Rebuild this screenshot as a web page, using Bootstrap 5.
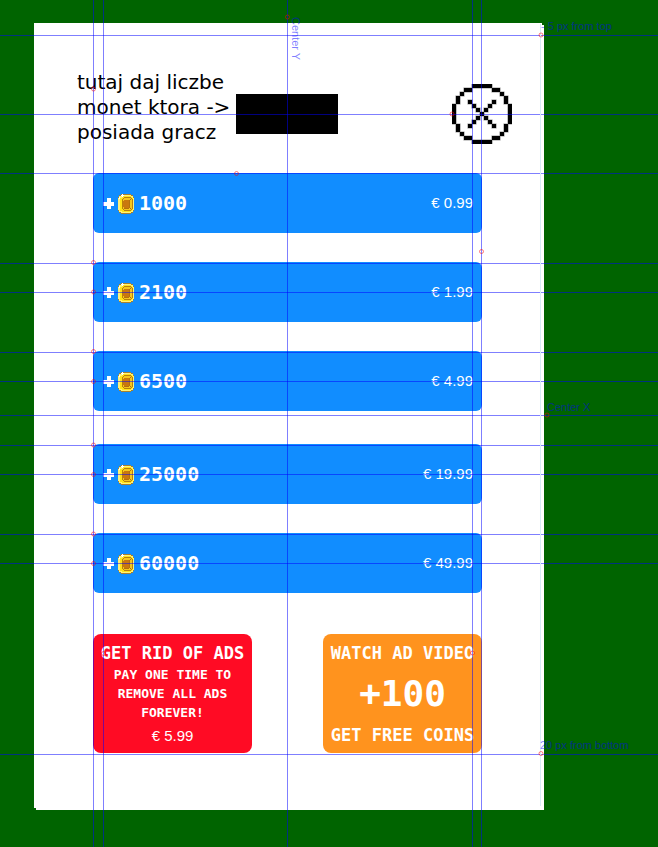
<!DOCTYPE html>
<html lang="pl">
<head>
<meta charset="utf-8">
<meta name="viewport" content="width=device-width, initial-scale=1">
<title>Coin shop</title>
<link href="https://cdn.jsdelivr.net/npm/bootstrap@5.3.0/dist/css/bootstrap.min.css" rel="stylesheet">
<style>
  body { background: #006400; font-family: "Liberation Sans", sans-serif; color: #000; }
  .stage { padding: 23px 114px 37px 34px; min-height: 847px; overflow: hidden; }
  .shop { background: #fff; padding: 47px 62px 57px 59px; }
  .shop-head { margin-left: -16px; margin-right: -30px; margin-bottom: 28px; }
  .note { font: 20px/25px "DejaVu Sans", sans-serif; width: 159px; white-space: nowrap; }
  .balance { width: 102px; height: 40px; background: #000; margin-top: 24px; }
  .close-btn { width: 60px; height: 60px; margin-top: 14px; background: none; line-height: 0; }
  .pack { background: #118dff; color: #fff; height: 60px; border-radius: 6px; padding: 0 9px 0 8px; }
  .packs { gap: 29px; }
  .pack-big { margin-top: 4px; }
  .pixel { font-family: "DejaVu Sans Mono", monospace; font-weight: 700; }
  .amount { font-size: 20px; line-height: 24px; }
  .plus-icon { margin-left: 2px; margin-right: 4px; }
  .coin { margin-right: 5px; margin-top: 1px; }
  .price { font-size: 15px; line-height: 20px; }
  .offers { margin-top: 41px; }
  .offer { width: 159px; height: 119px; border-radius: 8px; color: #fff; white-space: nowrap; padding: 8px 0 7px; }
  .offer-ads { background: #ff0b24; }
  .offer-video { background: #ff931e; }
  .offer-title { font-size: 17px; line-height: 22px; }
  .offer-text { font-size: 13px; line-height: 19px; margin-bottom: 3px; }
  .offer-sum { font-size: 36px; line-height: 40px; }
  .guides { left: 0; top: 0; pointer-events: none; }
  .guides text { font: 11px "Liberation Sans", sans-serif; fill: #00f; fill-opacity: .5; }
</style>
<script src="https://cdn.jsdelivr.net/npm/bootstrap@5.3.0/dist/js/bootstrap.bundle.min.js"></script>
</head>
<body>
<svg width="0" height="0" class="position-absolute" aria-hidden="true">
  <symbol id="coin" viewBox="0 0 16 20" shape-rendering="crispEdges">
    <path fill="#a8802c" d="M3 0h10v1h2v2h1v14h-1v2h-2v1H3v-1H1v-2H0V3h1V1h2z"/>
    <path fill="#fff27a" d="M3 1h10v1h2v2h1v12h-1v2h-2v1H3v-1H1v-2H0V4h1V2h2z"/>
    <path fill="#ffe21a" d="M4 2h9v1h1v1h1v12h-1v1h-1v1H4v-1H2V4h2z"/>
    <path fill="#b8800c" d="M6 3h7v1h1v1h1v10h-1v1h-1v1H6v-1H5v-1H4V5h1V4h1z"/>
    <path fill="#f5c71c" d="M6 4h7v1h1v10h-1v1H6v-1H5V5h1z"/>
    <path fill="#c9780e" d="M5 7h1V6h5v8H6v-1H5z"/>
    <path fill="#b4700c" d="M11 6h1v8h-1zM6 14h5v1H6zM12 5h1v1h-1zM12 14h1v1h-1z"/>
    <path fill="#fff" d="M4 0h1v1h1v1H5v1H4V2H3V1h1zM1 3h1v2H1z"/>
  </symbol>
  <symbol id="plus" viewBox="0 0 11 11"><path fill="#fff" d="M4 0h4v4h3v4H8v3H4V8H0V4h4z"/></symbol>
</svg>
<main class="stage position-relative">
  <section class="shop">
    <div class="shop-head d-flex align-items-start">
      <div class="note">tutaj daj liczbe<br>monet ktora -&gt;<br>posiada gracz</div>
      <div class="balance"></div>
      <button type="button" class="close-btn border-0 p-0 ms-auto" aria-label="Close">
        <svg width="60" height="60" viewBox="0 0 15 15"></svg>
      </button>
    </div>
    <div class="packs d-flex flex-column">
      <button type="button" class="pack border-0 d-flex align-items-center"><svg class="plus-icon" width="11" height="11"><use href="#plus"/></svg><svg class="coin" width="16" height="20"><use href="#coin"/></svg><span class="pixel amount">1000</span><span class="price ms-auto">€ 0.99</span></button>
      <button type="button" class="pack border-0 d-flex align-items-center"><svg class="plus-icon" width="11" height="11"><use href="#plus"/></svg><svg class="coin" width="16" height="20"><use href="#coin"/></svg><span class="pixel amount">2100</span><span class="price ms-auto">€ 1.99</span></button>
      <button type="button" class="pack border-0 d-flex align-items-center"><svg class="plus-icon" width="11" height="11"><use href="#plus"/></svg><svg class="coin" width="16" height="20"><use href="#coin"/></svg><span class="pixel amount">6500</span><span class="price ms-auto">€ 4.99</span></button>
      <button type="button" class="pack pack-big border-0 d-flex align-items-center"><svg class="plus-icon" width="11" height="11"><use href="#plus"/></svg><svg class="coin" width="16" height="20"><use href="#coin"/></svg><span class="pixel amount">25000</span><span class="price ms-auto">€ 19.99</span></button>
      <button type="button" class="pack border-0 d-flex align-items-center"><svg class="plus-icon" width="11" height="11"><use href="#plus"/></svg><svg class="coin" width="16" height="20"><use href="#coin"/></svg><span class="pixel amount">60000</span><span class="price ms-auto">€ 49.99</span></button>
    </div>
    <div class="offers d-flex justify-content-between">
      <button type="button" class="offer offer-ads border-0 d-flex flex-column align-items-center justify-content-between">
        <span class="pixel offer-title">GET RID OF ADS</span>
        <span class="pixel offer-text">PAY ONE TIME TO<br>REMOVE ALL ADS<br>FOREVER!</span>
        <span class="price">€ 5.99</span>
      </button>
      <button type="button" class="offer offer-video border-0 d-flex flex-column align-items-center justify-content-between">
        <span class="pixel offer-title">WATCH AD VIDEO</span>
        <span class="pixel offer-sum">+100</span>
        <span class="pixel offer-title">GET FREE COINS</span>
      </button>
    </div>
  </section>
  <svg class="guides position-absolute w-100 h-100">
    <g fill="#00f" fill-opacity=".5" shape-rendering="crispEdges">
      <rect x="93" width="1" height="100%"/><rect x="103" width="1" height="100%"/><rect x="287" width="1" height="100%"/><rect x="472" width="1" height="100%"/><rect x="481" width="1" height="100%"/>
      <rect y="35" width="100%" height="1"/><rect y="114" width="100%" height="1"/><rect y="173" width="100%" height="1"/><rect y="263" width="100%" height="1"/><rect y="292" width="100%" height="1"/><rect y="352" width="100%" height="1"/><rect y="381" width="100%" height="1"/><rect y="415" width="100%" height="1"/><rect y="445" width="100%" height="1"/><rect y="474" width="100%" height="1"/><rect y="534" width="100%" height="1"/><rect y="563" width="100%" height="1"/><rect y="754" width="100%" height="1"/>
    </g>
    <rect x="540" y="24" width="1" height="782" fill="#d8ecf8"/>
    <path fill="#006400" d="M542 23h2v2h-2zM34 808h2v2h-2z"/>
    <g fill="none" stroke="#f00" stroke-opacity=".5">
      <circle cx="287.500" cy="17" r="2"/><circle cx="93.500" cy="89" r="2"/><circle cx="236.500" cy="173.500" r="2"/><circle cx="452" cy="114" r="2"/><circle cx="541" cy="35" r="2"/><circle cx="481.500" cy="251.500" r="2"/>
      <circle cx="93.500" cy="262.500" r="2"/><circle cx="93.500" cy="292" r="2"/><circle cx="93.500" cy="351.500" r="2"/><circle cx="93.500" cy="381.500" r="2"/><circle cx="93.500" cy="445" r="2"/><circle cx="93.500" cy="474.500" r="2"/><circle cx="93.500" cy="534" r="2"/><circle cx="93.500" cy="563.500" r="2"/>
      <circle cx="547" cy="415" r="2"/><circle cx="541" cy="753.500" r="2"/><circle cx="103.500" cy="653.500" r="2"/><circle cx="472.500" cy="653" r="2"/>
    </g>
    <text x="541" y="30">- 5 px from top</text>
    <text x="547" y="411">Center X</text>
    <text x="540" y="749">20 px from bottom</text>
    <text transform="translate(292 17) rotate(90)">Center Y</text>
  </svg>
</main>
<script>
  // Pixel-art close icon, one cell per character
  const rows = [
    ".....#####.....",
    "...##.....##...",
    "..#.........#..",
    ".#...........#.",
    ".#..#.....#..#.",
    "#....#...#....#",
    "#.....#.#.....#",
    "#......#......#",
    "#.....#.#.....#",
    "#....#...#....#",
    ".#..#.....#..#.",
    ".#...........#.",
    "..#.........#..",
    "...##.....##...",
    ".....#####....."
  ];
  let d = "";
  rows.forEach((r, y) => [...r].forEach((c, x) => { if (c === "#") d += `M${x} ${y}h1v1h-1z`; }));
  document.querySelector(".close-btn svg").innerHTML = `<path d="${d}" stroke="#000" stroke-opacity=".4" stroke-width=".3"/>`;
</script>
</body>
</html>
